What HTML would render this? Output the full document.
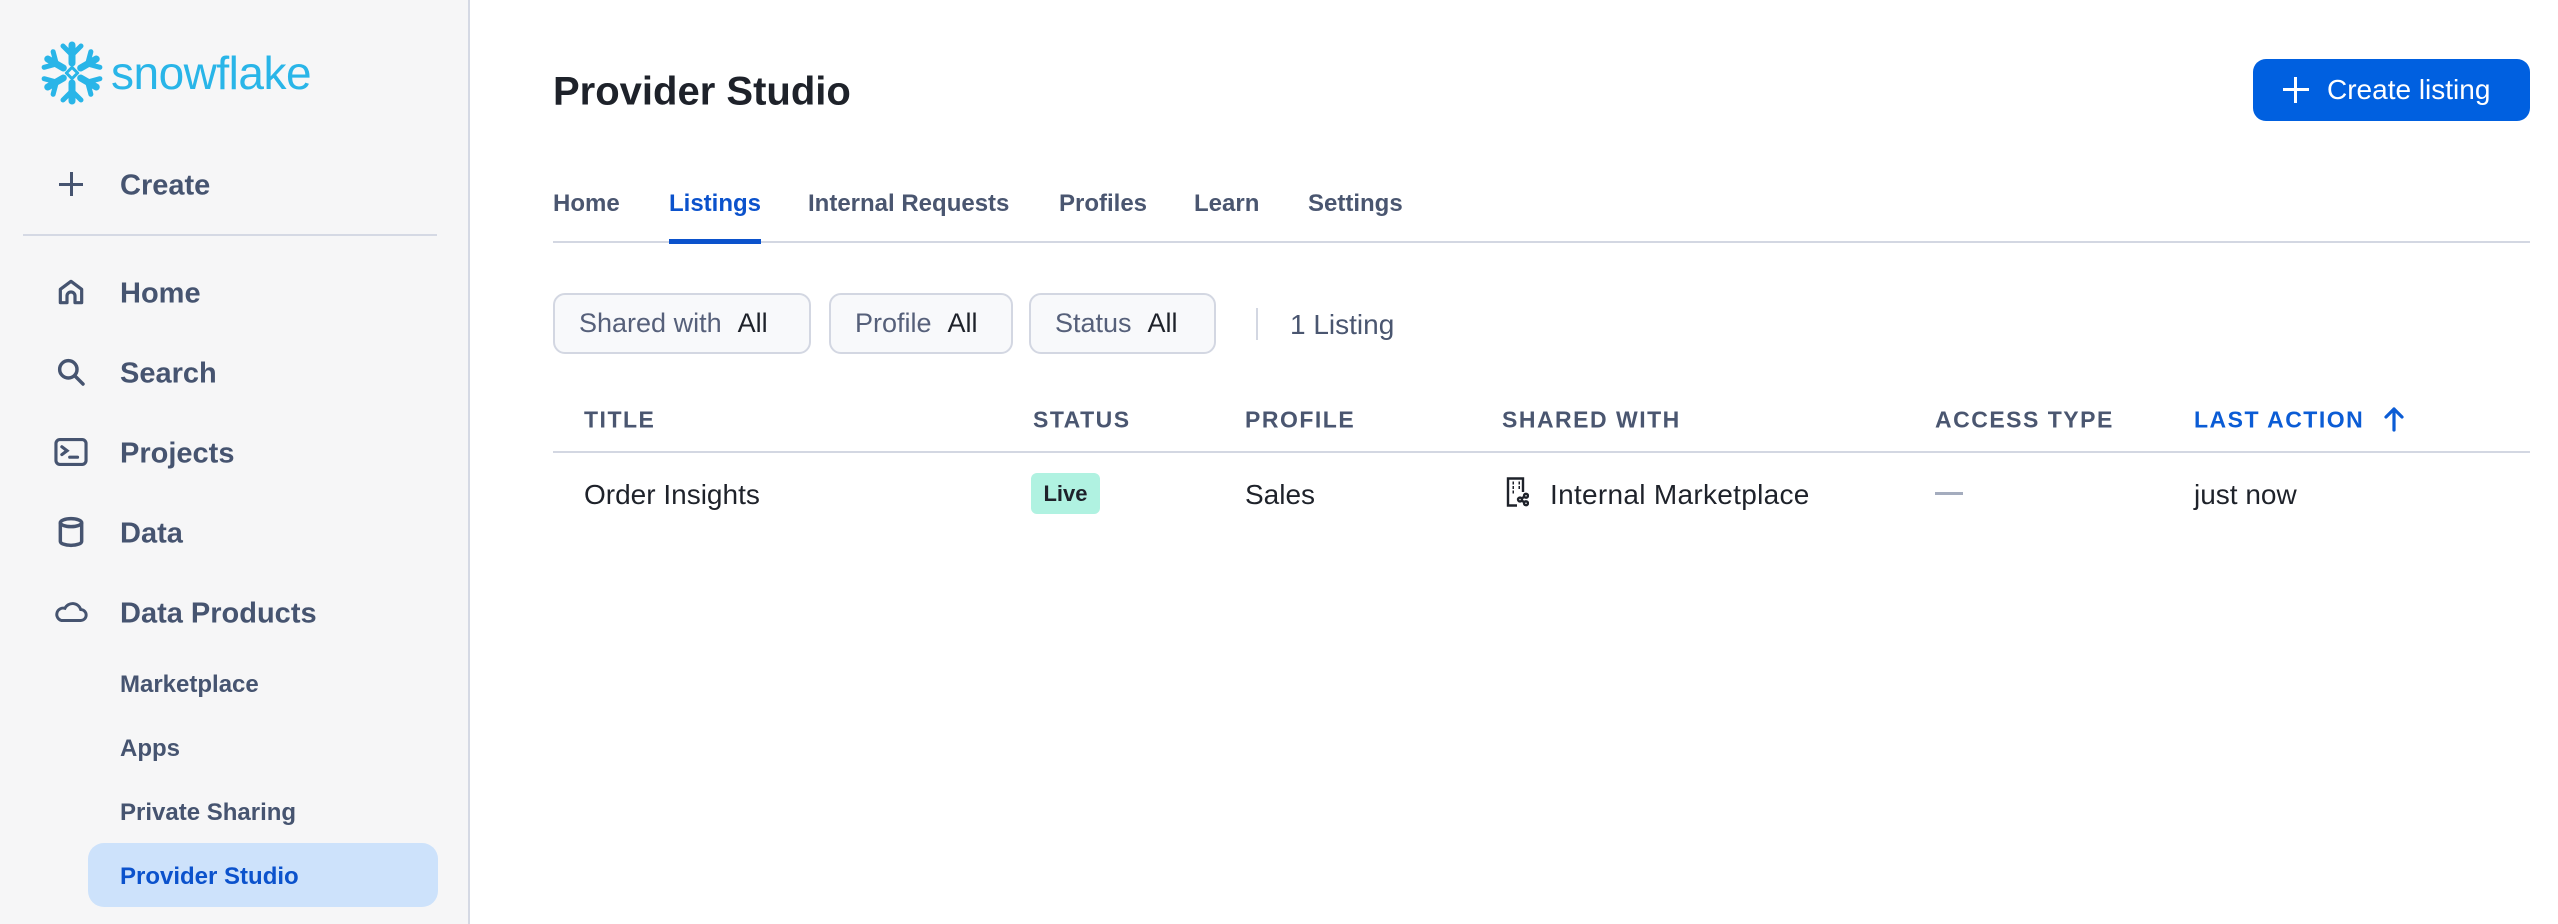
<!DOCTYPE html>
<html><head><meta charset="utf-8"><style>
*{margin:0;padding:0;box-sizing:border-box}
body{width:2558px;height:924px;overflow:hidden;background:#fff;font-family:"Liberation Sans",sans-serif;position:relative}
.sb{position:absolute;left:0;top:0;width:470px;height:924px;background:#f6f6f7;border-right:2px solid #d5d9e4}
.a{position:absolute;white-space:nowrap}
.nav{font-size:29px;font-weight:700;color:#465470;transform:translateY(calc(-50% + 2px))}
.sub{font-size:24px;font-weight:700;color:#465470;transform:translateY(calc(-50% + 2px))}
.ic{position:absolute;transform:translate(-50%,-50%)}
.tab{font-size:24px;font-weight:700;color:#4a5670;transform:translateY(calc(-50% + 2px))}
.f{position:absolute;top:293px;height:61px;border:2px solid #d3d7e2;border-radius:12px;background:#f8f9fb;font-size:27px;color:#56607a;display:flex;align-items:center;padding-left:24px}
.f b{color:#1e222a;font-weight:400;margin-left:16px}
.th{font-size:23px;font-weight:700;color:#4a5670;letter-spacing:1.5px;transform:translateY(calc(-50% + 1px))}
.td{font-size:28px;color:#1e222a;transform:translateY(calc(-50% + 2px))}
</style></head><body>
<div class="sb">
<svg class="a" style="left:38px;top:40px" width="68" height="66" viewBox="-34 -33 68 66" stroke="#29b5e8" stroke-width="7" stroke-linecap="round" stroke-linejoin="round" fill="none">
<g id="arm"><path d="M0 -10 V-28"/><path d="M-9 -27 L0 -18 L9 -27" stroke-width="5"/></g>
<use href="#arm" transform="rotate(60)"/><use href="#arm" transform="rotate(120)"/><use href="#arm" transform="rotate(180)"/><use href="#arm" transform="rotate(240)"/><use href="#arm" transform="rotate(300)"/>
<rect x="-4" y="-4" width="8" height="8" transform="rotate(45)" stroke-width="3"/>
</svg>
<div class="a" style="left:111px;top:46px;font-size:46px;color:#29b5e8;letter-spacing:-0.5px">snowflake</div>
<div class="a" style="left:59px;top:183px;width:24px;height:3px;background:#465470"></div>
<div class="a" style="left:70px;top:172px;width:3px;height:24px;background:#465470"></div>
<div class="a nav" style="left:120px;top:184px">Create</div>
<div class="a" style="left:23px;top:234px;width:414px;height:2px;background:#d5d9e4"></div>
<svg class="ic" style="left:71px;top:292px" width="32" height="32" viewBox="0 0 24 24" fill="none" stroke="#465470" stroke-width="2.4" stroke-linejoin="round"><path d="M4 20V10l8-6 8 6v10h-5v-5a3 3 0 0 0-6 0v5z"/></svg>
<div class="a nav" style="left:120px;top:292px">Home</div>
<svg class="ic" style="left:71px;top:372px" width="32" height="32" viewBox="0 0 24 24" fill="none" stroke="#465470" stroke-width="2.6" stroke-linecap="round"><circle cx="10" cy="10" r="6.5"/><path d="M15 15l6 6"/></svg>
<div class="a nav" style="left:120px;top:372px">Search</div>
<svg class="ic" style="left:71px;top:452px" width="34" height="30" viewBox="0 0 26 22" fill="none" stroke="#465470" stroke-width="2.4" stroke-linecap="round"><rect x="1.5" y="1.5" width="23" height="19" rx="3"/><path d="M6 7l4 3-4 3M12 15h6"/></svg>
<div class="a nav" style="left:120px;top:452px">Projects</div>
<svg class="ic" style="left:71px;top:532px" width="28" height="32" viewBox="0 0 20 24" fill="none" stroke="#465470" stroke-width="2.6"><ellipse cx="10" cy="5" rx="8" ry="3"/><path d="M2 5v14c0 1.7 3.6 3 8 3s8-1.3 8-3V5"/></svg>
<div class="a nav" style="left:120px;top:532px">Data</div>
<svg class="ic" style="left:71px;top:612px" width="34" height="24" viewBox="0 0 28 18" fill="none" stroke="#465470" stroke-width="2.4"><path d="M6 16h16a4.5 4.5 0 0 0 0-9 7 7 0 0 0-13-1A5 5 0 0 0 6 16z"/></svg>
<div class="a nav" style="left:120px;top:612px">Data Products</div>
<div class="a sub" style="left:120px;top:683px">Marketplace</div>
<div class="a sub" style="left:120px;top:747px">Apps</div>
<div class="a sub" style="left:120px;top:811px">Private Sharing</div>
<div class="a" style="left:88px;top:843px;width:350px;height:64px;background:#cde2fb;border-radius:16px"></div>
<div class="a sub" style="left:120px;top:875px;color:#0b52cc">Provider Studio</div>
</div>

<div class="a" style="left:553px;top:92px;transform:translateY(-50%);font-size:40px;font-weight:700;color:#1e222a">Provider Studio</div>
<div class="a" style="left:2253px;top:59px;width:277px;height:62px;background:#0060e0;border-radius:13px;color:#fff;font-size:28px;display:flex;align-items:center;padding-left:74px">Create listing</div>
<div class="a" style="left:2283px;top:88px;width:26px;height:3px;background:#fff"></div>
<div class="a" style="left:2294px;top:77px;width:3px;height:26px;background:#fff"></div>

<div class="a tab" style="left:553px;top:202px">Home</div>
<div class="a tab" style="left:669px;top:202px;color:#0b52cc">Listings</div>
<div class="a tab" style="left:808px;top:202px">Internal Requests</div>
<div class="a tab" style="left:1059px;top:202px">Profiles</div>
<div class="a tab" style="left:1194px;top:202px">Learn</div>
<div class="a tab" style="left:1308px;top:202px">Settings</div>
<div class="a" style="left:553px;top:241px;width:1977px;height:2px;background:#d3d7e2"></div>
<div class="a" style="left:669px;top:239px;width:92px;height:5px;background:#0b52cc"></div>

<div class="f" style="left:553px;width:258px">Shared with<b>All</b></div>
<div class="f" style="left:829px;width:184px">Profile<b>All</b></div>
<div class="f" style="left:1029px;width:187px">Status<b>All</b></div>
<div class="a" style="left:1256px;top:308px;width:2px;height:32px;background:#d3d7e2"></div>
<div class="a" style="left:1290px;top:325px;transform:translateY(-50%);font-size:28px;color:#4a5670">1 Listing</div>

<div class="a th" style="left:584px;top:419px">TITLE</div>
<div class="a th" style="left:1033px;top:419px">STATUS</div>
<div class="a th" style="left:1245px;top:419px">PROFILE</div>
<div class="a th" style="left:1502px;top:419px">SHARED WITH</div>
<div class="a th" style="left:1935px;top:419px">ACCESS TYPE</div>
<div class="a th" style="left:2194px;top:419px;color:#0b5cd5">LAST ACTION</div>
<svg class="a" style="left:2382px;top:406px" width="24" height="26" viewBox="0 0 24 26" fill="none" stroke="#0b5cd5" stroke-width="3.2" stroke-linecap="round" stroke-linejoin="round"><path d="M12 24V3M4 11l8-8 8 8"/></svg>
<div class="a" style="left:553px;top:451px;width:1977px;height:2px;background:#d3d7e2"></div>

<div class="a td" style="left:584px;top:493px">Order Insights</div>
<div class="a" style="left:1031px;top:473px;width:69px;height:41px;background:#b0f2e1;border-radius:6px;font-size:22px;font-weight:700;color:#1e222a;display:flex;align-items:center;justify-content:center">Live</div>
<div class="a td" style="left:1245px;top:493px">Sales</div>
<svg class="a" style="left:1505px;top:477px" width="24" height="30" viewBox="0 0 16 20" fill="none" stroke="#1e222a" stroke-width="1.6"><path d="M8 19H2V1h10v9"/><path d="M5 4h1M9 4h1M5 7h1M9 7h1M5 10h1" stroke-width="2"/><circle cx="10" cy="15" r="1.3"/><circle cx="14" cy="12.5" r="1.3"/><circle cx="14" cy="17.5" r="1.3"/><path d="M11 14.5l2-1.5M11 15.5l2 1.5"/></svg>
<div class="a td" style="left:1550px;top:493px;letter-spacing:0.3px">Internal Marketplace</div>
<div class="a" style="left:1935px;top:492px;width:28px;height:3px;background:#a4acbe"></div>
<div class="a td" style="left:2194px;top:493px">just now</div>
</body></html>
